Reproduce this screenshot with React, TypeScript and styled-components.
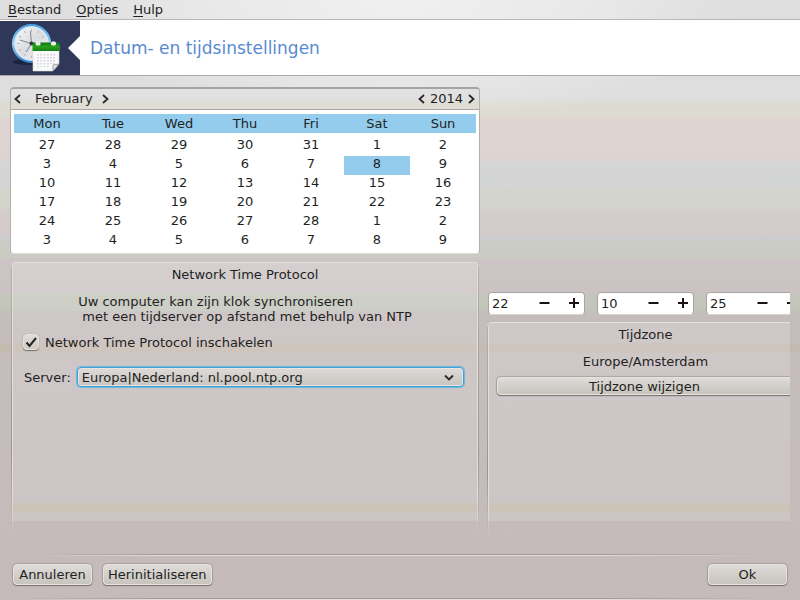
import React, { useId, useState } from "react";
import styled, { createGlobalStyle, css } from "styled-components";

const GlobalStyle = createGlobalStyle`
  *, *::before, *::after { box-sizing: border-box; }
  body {
    margin: 0;
    font-family: "DejaVu Sans", sans-serif;
    font-size: 13px;
    line-height: 15px;
    color: #221f1e;
  }
  button, input, select { font: inherit; color: inherit; }
`;

const Window = styled.div`
  min-height: 100vh;
  display: flex;
  flex-direction: column;
  overflow: hidden;
  background:
    radial-gradient(ellipse 340px 125px at 50% 0, rgba(255, 255, 255, 0.55), rgba(255, 255, 255, 0.3) 60%, transparent) no-repeat,
    linear-gradient(
      #dedede 0, #dedede 100px, #dcdcd3 103px, #dbdbd1 117px, #dfd6d4 117px, #ddd4d2 161px,
      #d5d5d5 161px, #d3d4d4 188px, #d3d4cb 188px, #d2d3ca 209px, #d5cccc 209px, #d3cbcb 236px,
      #cccbcd 236px, #cccbcd 241px, #cbccc3 241px, #cacac2 258px, #cdc4c5 258px, #cbc3c3 294px,
      #c4c5bb 294px, #c3c4ba 311px, #c5bcbc 311px, #c5bcbc 343px, #c4bab0 343px, #c4bab0 353px,
      #c5bcbc 353px, #c5bbbb 100%
    );
`;

const MenuBar = styled.nav`
  display: flex;
  gap: 15px;
  height: 20px;
  padding: 2px 8px;
  border-bottom: 1px solid #bbb5b0;
`;

const MenuItem = styled.button`
  border: 0;
  padding: 0;
  background: none;
  line-height: 15px;
  &::first-letter { text-decoration: underline; text-underline-offset: 2px; }
`;

const Banner = styled.header`
  display: flex;
  align-items: center;
  gap: 10px;
  height: 56px;
  padding-top: 1px;
  border-bottom: 1px solid #aca5a8;
  background: #fff;
  svg { flex: none; }
`;

const Title = styled.h1`
  margin: 0;
  font-size: 17px;
  line-height: 20px;
  font-weight: 400;
  color: #5a8ad2;
`;

const Content = styled.main`
  flex: 1;
  display: grid;
  grid-template-columns: minmax(0, 470fr) minmax(0, 303fr);
  gap: 7px;
  padding: 11px 10px 18px;
`;

const LeftColumn = styled.div`
  display: flex;
  flex-direction: column;
  gap: 8px;
`;

const RightColumn = styled.div`
  display: flex;
  flex-direction: column;
  gap: 7px;
  padding-top: 205px;
  overflow: hidden;
`;

const Calendar = styled.section`
  height: 167px;
  border: 1px solid #b3b0ae;
  border-top: 2px solid #a5a4a4;
  border-bottom-color: #dedcd9;
  border-radius: 4px;
  overflow: hidden;
  background: linear-gradient(transparent 21px, #fff 21px);
`;

const CalendarNav = styled.div`
  display: flex;
  align-items: center;
  justify-content: space-between;
  height: 21px;
  padding: 0 3px 1px 1px;
  border-bottom: 1px solid #aaa79f;
  background: linear-gradient(#e2e2e2, #dfdfdf 60%, #deded6 65%);
`;

const NavGroup = styled.div<{ $gap: number }>`
  display: flex;
  align-items: center;
  gap: ${(p) => p.$gap}px;
`;

const Month = styled.span`
  padding-left: 5px;
`;

const IconButton = styled.button`
  display: grid;
  place-items: center;
  width: 10px;
  height: 16px;
  padding: 0;
  border: 0;
  background: none;
`;

const Days = styled.table`
  width: calc(100% - 6px);
  margin: 4px 3px 0;
  border-collapse: collapse;
  table-layout: fixed;
  text-align: center;
  th {
    height: 19px;
    padding: 0;
    font-weight: 400;
    background: #94ccee;
  }
  tbody::before {
    content: "";
    display: table-row;
    height: 4px;
  }
`;

const Day = styled.td<{ $selected: boolean }>`
  height: 19px;
  padding: 0 0 4px;
  ${(p) => p.$selected && css`background: #94ccee;`}
`;

const Panel = styled.section<{ $openEnd?: boolean }>`
  position: relative;
  flex: 1;
  min-width: ${(p) => (p.$openEnd ? 317 : 0)}px;
  margin: ${(p) => (p.$openEnd ? 0 : "0 1px")};
  padding: 4px 10px;
  border-top: 1px solid #e4dfdc;
  border-radius: 5px 5px 0 0;
  background:
    linear-gradient(
      transparent calc(100% - 18px), rgba(204, 194, 168, 0.45) calc(100% - 18px),
      rgba(204, 194, 168, 0.45) calc(100% - 9px), transparent calc(100% - 9px)
    ) 0 0 / 100% calc(100% - 15px) no-repeat,
    linear-gradient(rgba(255, 255, 255, 0.18), rgba(255, 255, 255, 0.14)) 0 0 / 100% calc(100% - 15px) no-repeat;
  &::before,
  &::after {
    content: "";
    position: absolute;
    top: 3px;
    bottom: 0;
    width: 2px;
    background: linear-gradient(#b5aeac, #999393 70%, transparent) 0 0 / 1px 100% no-repeat,
      linear-gradient(#e4dfdd 85%, transparent) 1px 0 / 1px 100% no-repeat;
  }
  &::before { left: 0; }
  &::after {
    right: 0;
    transform: scaleX(-1);
    display: ${(p) => (p.$openEnd ? "none" : "block")};
  }
`;

const PanelTitle = styled.h2`
  margin: 0;
  font-size: 13px;
  line-height: 15px;
  font-weight: 400;
  text-align: center;
`;

const Description = styled.p`
  width: fit-content;
  margin: 12px auto 10px;
  white-space: pre;
`;

const CheckRow = styled.div`
  display: flex;
  align-items: center;
  gap: 6px;
  padding-left: 2px;
`;

const CheckBox = styled.span`
  display: grid;
  width: 16px;
  height: 16px;
  input, svg { grid-area: 1 / 1; }
  input {
    appearance: none;
    width: 16px;
    height: 16px;
    margin: 0;
    border: 1px solid #e6e2df;
    border-radius: 4px;
    background: linear-gradient(#dfdcda, #cfcac6);
    box-shadow: 0 1px 1px #77706c, 0 0 1px #8f8885;
  }
  svg { pointer-events: none; }
  input:not(:checked) + svg { visibility: hidden; }
`;

const ServerRow = styled.div`
  display: flex;
  align-items: center;
  gap: 6px;
  margin-top: 17px;
  padding: 0 5px 0 3px;
`;

const SelectBox = styled.div`
  flex: 1;
  display: grid;
  align-items: center;
  svg {
    grid-area: 1 / 1;
    justify-self: end;
    margin-right: 10px;
    pointer-events: none;
  }
`;

const Select = styled.select`
  grid-area: 1 / 1;
  appearance: none;
  width: 100%;
  height: 20px;
  padding: 0 24px 0 4px;
  border: 1px solid #3fa3da;
  border-radius: 4px;
  outline: 0;
  background: linear-gradient(#dddad8, #c9c4be);
  box-shadow: 0 0 1px 1px #6db6dd, inset 0 0 0 1px #e6e5e3;
`;

const TimeRow = styled.div`
  display: flex;
  gap: 12px;
  min-width: 317px;
  padding-left: 1px;
`;

const SpinBox = styled.div`
  flex: none;
  display: flex;
  align-items: center;
  gap: 10px;
  width: 97px;
  height: 23px;
  border: 1px solid #aaa5a2;
  border-bottom-color: #d8d4d1;
  border-radius: 4px;
  background: #fff;
  input {
    flex: 1;
    min-width: 0;
    height: 19px;
    padding: 0 0 0 3px;
    border: 0;
    outline: 0;
    background: none;
  }
`;

const StepButton = styled(IconButton)`
  width: 20px;
`;

const ZoneName = styled.p`
  margin: 12px 0 8px;
  text-align: center;
`;

const raised = css`
  border: 1px solid #e6e4e1;
  background: linear-gradient(#dedbd9, #c8c4bd);
  box-shadow: 0 1px 1px #79726e, 0 0 1px 1px #aaa29f;
  border-radius: 4px;
  padding: 0;
`;

const ZoneButton = styled.button`
  ${raised}
  display: block;
  width: calc(100% + 10px);
  padding-right: 12px;
  height: 18px;
`;

const Footer = styled.footer`
  display: flex;
  align-items: center;
  gap: 11px;
  height: 46px;
  padding: 9px 13px 14px;
  background:
    linear-gradient(90deg, transparent 4%, #a39b96 20%, #a39b96 75%, transparent 96%) 0 0 / 100% 1px no-repeat,
    linear-gradient(90deg, transparent 4%, #e2dddb 20%, #e2dddb 75%, transparent 96%) 0 1px / 100% 1px no-repeat,
    linear-gradient(90deg, transparent 2%, #a39b96 20%, #a39b96 75%, transparent 96%) 0 44px / 100% 1px no-repeat,
    linear-gradient(90deg, transparent 2%, #e2dddb 20%, #e2dddb 75%, transparent 96%) 0 45px / 100% 1px no-repeat;
`;

const ActionButton = styled.button<{ $end?: boolean }>`
  ${raised}
  height: 21px;
  min-width: 79px;
  padding: 0 4px;
  margin-left: ${(p) => (p.$end ? "auto" : 0)};
`;

function Chevron({ d, w, h }: { d: string; w: number; h: number }) {
  return (
    <svg width={w} height={h} viewBox={`0 0 ${w} ${h}`} fill="none" stroke="#2b2726" strokeWidth="1.8" aria-hidden="true">
      <path d={d} />
    </svg>
  );
}

const LEFT = "M7 1 2.500 5 7 9";
const RIGHT = "M2 1l4.500 4L2 9";

function ClockCalendarIcon() {
  const ticks = Array.from({ length: 12 }, (_, i) => i * 30);
  return (
    <svg width="80" height="54" viewBox="0 0 80 54" aria-hidden="true">
      <defs>
        <linearGradient id="rim" x1="0" y1="0" x2="0" y2="1">
          <stop offset="0" stopColor="#4ba0e4" />
          <stop offset="0.5" stopColor="#9ccdf0" />
          <stop offset="1" stopColor="#3784cc" />
        </linearGradient>
        <linearGradient id="face" x1="0" y1="0" x2="1" y2="1">
          <stop offset="0" stopColor="#fbfbfb" />
          <stop offset="0.5" stopColor="#dcdde0" />
          <stop offset="1" stopColor="#f5f5f5" />
        </linearGradient>
        <linearGradient id="green" x1="0" y1="0" x2="0" y2="1">
          <stop offset="0" stopColor="#0d7414" />
          <stop offset="0.5" stopColor="#27a01c" />
          <stop offset="1" stopColor="#148012" />
        </linearGradient>
      </defs>
      <path fill="#2f3858" d="M0 0h80v15L68 27l12 12v15H0z" />
      <ellipse cx="28" cy="41" rx="15" ry="3" fill="#1b2340" />
      <circle cx="31.5" cy="22.5" r="18.3" fill="url(#face)" stroke="url(#rim)" strokeWidth="2.6" />
      <circle cx="31.5" cy="22.5" r="16.6" fill="none" stroke="#d5ebfa" strokeWidth="1.2" />
      {ticks.map((a) => (
        <path key={a} d="M31.5 8v2.5" stroke="#b4b6bc" strokeWidth="1" transform={`rotate(${a} 31.5 22.5)`} />
      ))}
      <path d="M31.500 24 30.500 10M34 23.500 20 19M31.500 22.500 26 31" stroke="#77797f" strokeWidth="0.900" fill="none" />
      <circle cx="31.500" cy="22.500" r="2" fill="#33353a" />
      <path d="M33 25h26v18l-6 7H33z" fill="#fafafa" stroke="#d6d8d2" strokeWidth="0.6" />
      <path d="M32.500 22.500q0-1 1-1h25q1 0 1 1V30h-27z" fill="url(#green)" />
      <rect x="35.500" y="20.500" width="5" height="4" rx="1.500" fill="#e9f1e7" />
      <rect x="51" y="20.500" width="5" height="4" rx="1.500" fill="#e9f1e7" />
      <path d="M38 33v13M41 33v13M44.500 33v13M48 33v13" stroke="#cfcfd6" strokeWidth="1.500" strokeDasharray="1.500 1.500" />
      <path d="M51 33v10M54 33v10" stroke="#dcc0ea" strokeWidth="1.500" strokeDasharray="1.500 1.500" />
      <path d="M53 50v-6l6-1z" fill="#e8e8e8" stroke="#8c9089" strokeWidth="0.800" />
    </svg>
  );
}

function Spinner({ label, initial, max }: { label: string; initial: number; max: number }) {
  const [value, setValue] = useState(initial);
  return (
    <SpinBox>
      <input
        aria-label={label}
        inputMode="numeric"
        value={value}
        onChange={(e) => setValue(Math.min(max, Number(e.target.value) || 0))}
      />
      <StepButton aria-label={`${label} verlagen`} onClick={() => setValue(Math.max(0, value - 1))}>
        <svg width="11" height="11" viewBox="0 0 11 11" aria-hidden="true">
          <path d="M0.500 5h10" stroke="#1c1214" strokeWidth="2" />
        </svg>
      </StepButton>
      <StepButton aria-label={`${label} verhogen`} onClick={() => setValue(Math.min(max, value + 1))}>
        <svg width="11" height="11" viewBox="0 0 11 11" aria-hidden="true">
          <path d="M0 5h10M5 0v10" stroke="#1c1214" strokeWidth="2" />
        </svg>
      </StepButton>
    </SpinBox>
  );
}

const WEEKDAYS = ["Mon", "Tue", "Wed", "Thu", "Fri", "Sat", "Sun"];
const WEEKS = [
  [27, 28, 29, 30, 31, 1, 2],
  [3, 4, 5, 6, 7, 8, 9],
  [10, 11, 12, 13, 14, 15, 16],
  [17, 18, 19, 20, 21, 22, 23],
  [24, 25, 26, 27, 28, 1, 2],
  [3, 4, 5, 6, 7, 8, 9],
];

export default function App() {
  const id = useId();
  const [selected, setSelected] = useState("1-5");
  return (
    <Window>
      <GlobalStyle />
      <MenuBar>
        {["Bestand", "Opties", "Hulp"].map((m) => (
          <MenuItem key={m}>{m}</MenuItem>
        ))}
      </MenuBar>
      <Banner>
        <ClockCalendarIcon />
        <Title>Datum- en tijdsinstellingen</Title>
      </Banner>
      <Content>
        <LeftColumn>
          <Calendar>
            <CalendarNav>
              <NavGroup $gap={8}>
                <IconButton aria-label="Vorige maand"><Chevron d={LEFT} w={9} h={10} /></IconButton>
                <Month>February</Month>
                <IconButton aria-label="Volgende maand"><Chevron d={RIGHT} w={9} h={10} /></IconButton>
              </NavGroup>
              <NavGroup $gap={3}>
                <IconButton aria-label="Vorig jaar"><Chevron d={LEFT} w={9} h={10} /></IconButton>
                <span>2014</span>
                <IconButton aria-label="Volgend jaar"><Chevron d={RIGHT} w={9} h={10} /></IconButton>
              </NavGroup>
            </CalendarNav>
            <Days>
              <thead>
                <tr>{WEEKDAYS.map((d) => <th key={d} scope="col">{d}</th>)}</tr>
              </thead>
              <tbody>
                {WEEKS.map((week, r) => (
                  <tr key={r}>
                    {week.map((d, c) => (
                      <Day key={c} $selected={selected === `${r}-${c}`} onClick={() => setSelected(`${r}-${c}`)}>
                        {d}
                      </Day>
                    ))}
                  </tr>
                ))}
              </tbody>
            </Days>
          </Calendar>
          <Panel>
            <PanelTitle>Network Time Protocol</PanelTitle>
            <Description>{"Uw computer kan zijn klok synchroniseren\n met een tijdserver op afstand met behulp van NTP"}</Description>
            <CheckRow>
              <CheckBox>
                <input id={`${id}ntp`} type="checkbox" defaultChecked />
                <svg width="16" height="16" viewBox="0 0 16 16" aria-hidden="true">
                  <path d="M3.500 8.500l3 3.500 6.500-8" fill="none" stroke="#262322" strokeWidth="2" />
                </svg>
              </CheckBox>
              <label htmlFor={`${id}ntp`}>Network Time Protocol inschakelen</label>
            </CheckRow>
            <ServerRow>
              <label htmlFor={`${id}server`}>Server:</label>
              <SelectBox>
                <Select id={`${id}server`}>
                  <option>Europa|Nederland: nl.pool.ntp.org</option>
                </Select>
                <Chevron d="M1 2.500l4 4 4-4" w={10} h={9} />
              </SelectBox>
            </ServerRow>
          </Panel>
        </LeftColumn>
        <RightColumn>
          <TimeRow>
            <Spinner label="Uren" initial={22} max={23} />
            <Spinner label="Minuten" initial={10} max={59} />
            <Spinner label="Seconden" initial={25} max={59} />
          </TimeRow>
          <Panel $openEnd>
            <PanelTitle>Tijdzone</PanelTitle>
            <ZoneName>Europe/Amsterdam</ZoneName>
            <ZoneButton>Tijdzone wijzigen</ZoneButton>
          </Panel>
        </RightColumn>
      </Content>
      <Footer>
        <ActionButton>Annuleren</ActionButton>
        <ActionButton>Herinitialiseren</ActionButton>
        <ActionButton $end>Ok</ActionButton>
      </Footer>
    </Window>
  );
}
